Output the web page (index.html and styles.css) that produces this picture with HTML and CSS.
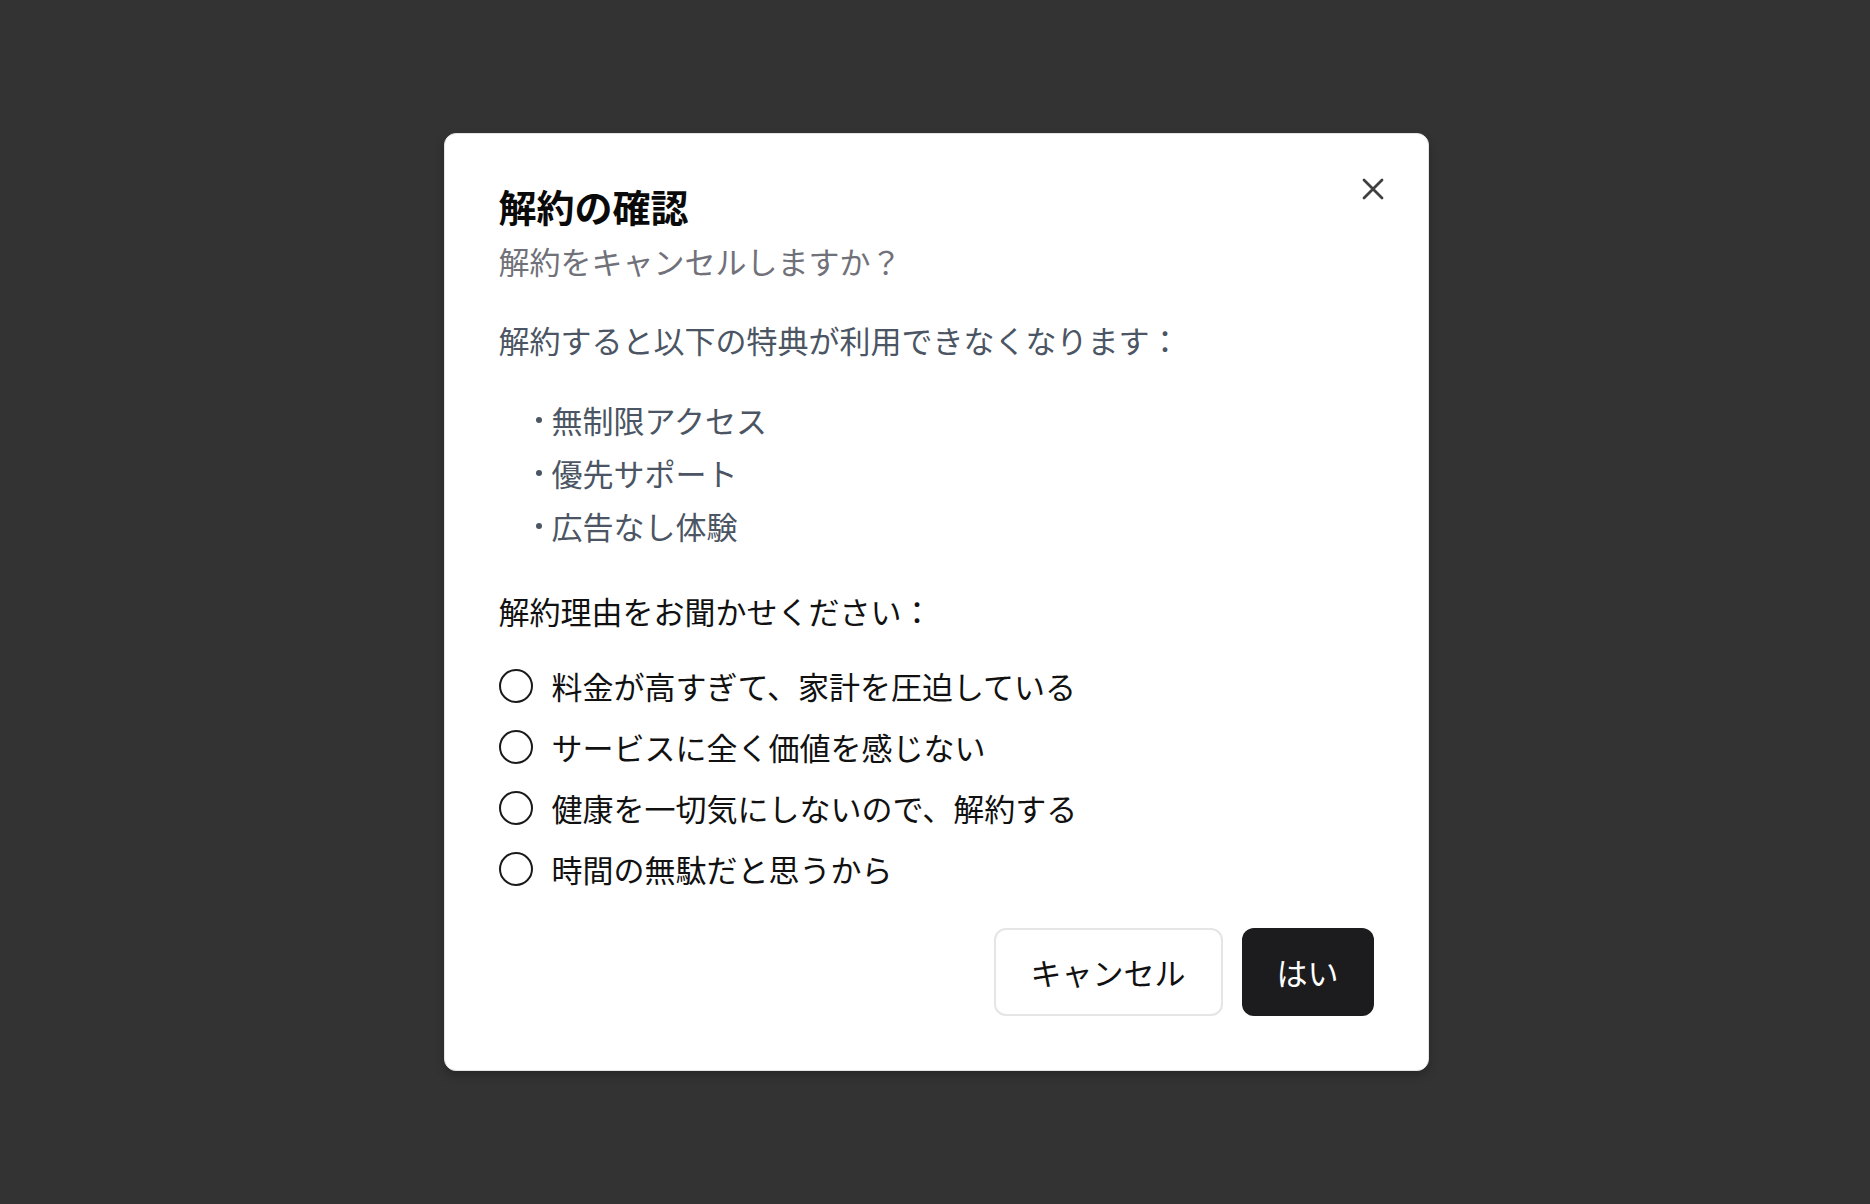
FILE: index.html
```html
<!DOCTYPE html>
<html lang="ja">
<head>
<meta charset="utf-8">
<title>解約の確認</title>
<link rel="stylesheet" href="styles.css">
</head>
<body>
<div class="overlay">
  <div class="dialog" role="dialog" aria-labelledby="dlg-title">
    <button class="close" type="button" aria-label="閉じる">
      <svg viewBox="0 0 24 24" width="24" height="24" aria-hidden="true"><path d="M3 3 L21 21 M21 3 L3 21" /></svg>
    </button>
    <h2 class="title" id="dlg-title">解約の確認</h2>
    <p class="subtitle">解約をキャンセルしますか？</p>
    <p class="lead">解約すると以下の特典が利用できなくなります：</p>
    <ul class="perks">
      <li>無制限アクセス</li>
      <li>優先サポート</li>
      <li>広告なし体験</li>
    </ul>
    <p class="ask">解約理由をお聞かせください：</p>
    <div class="reasons">
      <label class="reason"><input class="radio" type="radio" name="reason"><span>料金が高すぎて、家計を圧迫している</span></label>
      <label class="reason"><input class="radio" type="radio" name="reason"><span>サービスに全く価値を感じない</span></label>
      <label class="reason"><input class="radio" type="radio" name="reason"><span>健康を一切気にしないので、解約する</span></label>
      <label class="reason"><input class="radio" type="radio" name="reason"><span>時間の無駄だと思うから</span></label>
    </div>
    <div class="actions">
      <button class="btn btn-outline" type="button">キャンセル</button>
      <button class="btn btn-primary" type="button">はい</button>
    </div>
  </div>
</div>
</body>
</html>
```

FILE: styles.css
```css
* { box-sizing: border-box; }
html, body {
  margin: 0;
  padding: 0;
  height: 100%;
}
body {
  background: #333333;
  font-family: "Noto Sans CJK JP", "Noto Sans", sans-serif;
}
.overlay {
  height: 100vh;
  display: flex;
  align-items: center;
  justify-content: center;
  padding-left: 2px;
}
.dialog {
  position: relative;
  width: 985px;
  background: #ffffff;
  border: 1px solid #e4e4e7;
  border-radius: 12px;
  box-shadow: 0 4px 10px rgba(0, 0, 0, 0.25);
  padding: 53px 54px 54px;
  display: flex;
  flex-direction: column;
}
.close {
  position: absolute;
  top: 42px;
  right: 42px;
  width: 26px;
  height: 26px;
  padding: 0;
  border: 0;
  background: transparent;
  display: flex;
  align-items: center;
  justify-content: center;
}
.close svg {
  width: 24px;
  height: 24px;
}
.close svg path {
  stroke: #404040;
  stroke-width: 2.8;
  stroke-linecap: round;
  fill: none;
}
.title {
  margin: 0;
  font-size: 38px;
  line-height: 38px;
  font-weight: 700;
  color: #0a0a0a;
}
.subtitle {
  margin: 16px 0 0;
  font-size: 31px;
  line-height: 40px;
  color: #71717a;
}
.lead {
  margin: 39px 0 0;
  font-size: 31px;
  line-height: 40px;
  color: #4b5563;
}
.perks {
  list-style: none;
  margin: 33px 0 0;
  padding: 0 0 0 37px;
}
.perks li {
  font-size: 31px;
  line-height: 53px;
  color: #4b5563;
  display: flex;
  align-items: center;
}
.perks li::before {
  content: "";
  width: 6px;
  height: 6px;
  border-radius: 50%;
  background: #4b5563;
  margin-right: 10px;
  flex: none;
}
.ask {
  margin: 39px 0 0;
  font-size: 31px;
  line-height: 40px;
  color: #111111;
}
.reasons {
  margin-top: 35px;
  display: flex;
  flex-direction: column;
  gap: 21px;
}
.reason {
  display: flex;
  align-items: center;
  gap: 19px;
  font-size: 31px;
  line-height: 40px;
  color: #111111;
}
.radio {
  appearance: none;
  -webkit-appearance: none;
  margin: 0;
  width: 34px;
  height: 34px;
  border: 2.5px solid #1a1a1a;
  border-radius: 50%;
  background: #ffffff;
  flex: none;
}
.actions {
  margin-top: 39px;
  display: flex;
  justify-content: flex-end;
  gap: 19px;
}
.btn {
  height: 88px;
  padding: 0 35px;
  border-radius: 12px;
  font-family: inherit;
  font-size: 31px;
  line-height: 40px;
  cursor: pointer;
}
.btn-outline {
  background: #ffffff;
  color: #111111;
  border: 2px solid #e5e5e5;
  min-width: 226px;
}
.btn-primary {
  background: #1c1c1e;
  color: #ffffff;
  border: 0;
  min-width: 132px;
}
```
